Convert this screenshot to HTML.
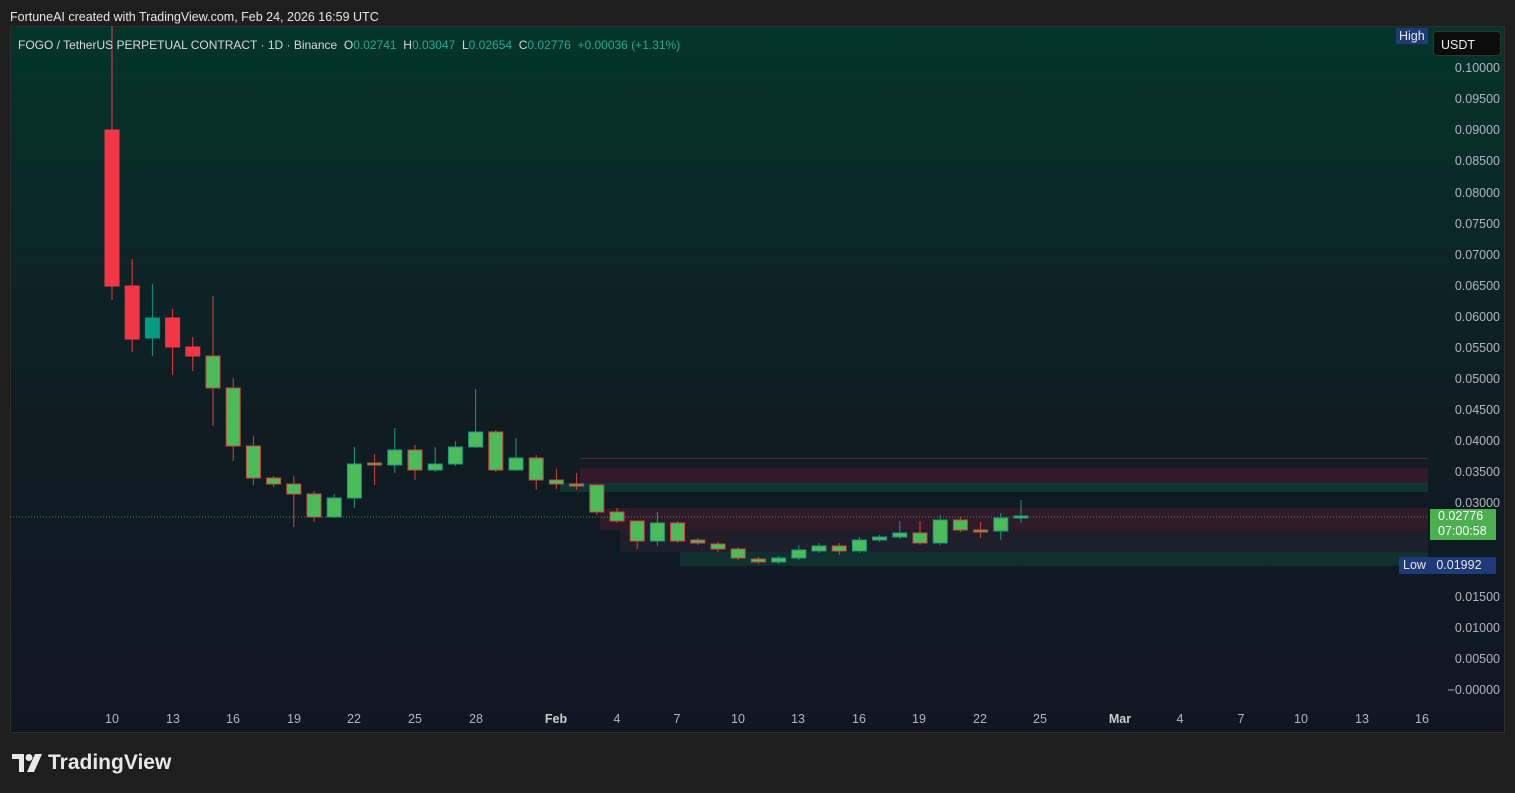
<!DOCTYPE html>
<html><head><meta charset="utf-8"><style>
html,body{margin:0;padding:0;background:#1e1e1e;width:1515px;height:793px;overflow:hidden;font-family:"Liberation Sans",sans-serif}
#top{position:absolute;left:10px;top:10px;color:#e6e6e6;font-size:12.5px}
#box{position:absolute;left:10px;top:26px;width:1495px;height:707px;background:linear-gradient(#03352a 0%,#0b2627 30%,#101b22 60%,#111722 100%);border:1px solid #2e2e2e;box-sizing:border-box}
#legend{position:absolute;left:18px;top:38px;font-size:12px;color:#d9d9d9;white-space:nowrap}
#legend b{font-weight:normal;color:#22ab94}
.pl{position:absolute;right:15px;font-size:12.5px;color:#b2b5be;text-align:right}
.tl{position:absolute;top:712px;font-size:12.5px;color:#b2b5be;transform:translateX(-50%)}
#logo{position:absolute;left:12px;top:751px;color:#e8e8e8;font-size:21px;font-weight:bold;display:flex;align-items:center;gap:6px}
svg{position:absolute;left:0;top:0}
</style></head><body>
<div id="top">FortuneAI created with TradingView.com, Feb 24, 2026 16:59 UTC</div>
<div id="box"></div>
<svg id="s" width="1515" height="793"></svg>
<div id="legend">FOGO / TetherUS PERPETUAL CONTRACT · 1D · Binance &nbsp;O<b>0.02741</b> &nbsp;H<b>0.03047</b> &nbsp;L<b>0.02654</b> &nbsp;C<b>0.02776</b> &nbsp;<b>+0.00036 (+1.31%)</b></div>
<div style="position:absolute;left:1396px;top:28px;background:#1e3a78;color:#e6e6e6;font-size:12.5px;padding:1px 3px">High</div>
<div style="position:absolute;left:1433px;top:31px;width:68px;height:25px;background:#0c0c0c;border:1px solid #333;border-radius:4px;box-sizing:border-box;color:#eee;font-size:12.5px;padding:6px 0 0 7px">USDT</div>
<div class="pl" style="top:61px">0.10000</div>
<div class="pl" style="top:92px">0.09500</div>
<div class="pl" style="top:123px">0.09000</div>
<div class="pl" style="top:154px">0.08500</div>
<div class="pl" style="top:186px">0.08000</div>
<div class="pl" style="top:217px">0.07500</div>
<div class="pl" style="top:248px">0.07000</div>
<div class="pl" style="top:279px">0.06500</div>
<div class="pl" style="top:310px">0.06000</div>
<div class="pl" style="top:341px">0.05500</div>
<div class="pl" style="top:372px">0.05000</div>
<div class="pl" style="top:403px">0.04500</div>
<div class="pl" style="top:434px">0.04000</div>
<div class="pl" style="top:465px">0.03500</div>
<div class="pl" style="top:496px">0.03000</div>
<div class="pl" style="top:590px">0.01500</div>
<div class="pl" style="top:621px">0.01000</div>
<div class="pl" style="top:652px">0.00500</div>
<div class="pl" style="top:683px">−0.00000</div>
<div style="position:absolute;left:1430px;top:509px;width:66px;height:31px;background:#4caf50;color:#fff;font-size:12.5px;line-height:15px;padding-left:8px;box-sizing:border-box">0.02776<br>07:00:58</div>
<div style="position:absolute;left:1399px;top:557px;width:97px;height:17px;background:#1e3a78;color:#e6e6e6;font-size:12.5px;line-height:17px;padding-left:4px;box-sizing:border-box">Low&nbsp;&nbsp;&nbsp;0.01992</div>
<div class="tl" style="left:112px">10</div><div class="tl" style="left:173px">13</div><div class="tl" style="left:233px">16</div><div class="tl" style="left:294px">19</div><div class="tl" style="left:354px">22</div><div class="tl" style="left:415px">25</div><div class="tl" style="left:476px">28</div><div class="tl" style="left:556px;font-weight:bold;color:#ccc">Feb</div><div class="tl" style="left:617px">4</div><div class="tl" style="left:677px">7</div><div class="tl" style="left:738px">10</div><div class="tl" style="left:798px">13</div><div class="tl" style="left:859px">16</div><div class="tl" style="left:919px">19</div><div class="tl" style="left:980px">22</div><div class="tl" style="left:1040px">25</div><div class="tl" style="left:1120px;font-weight:bold;color:#ccc">Mar</div><div class="tl" style="left:1180px">4</div><div class="tl" style="left:1241px">7</div><div class="tl" style="left:1301px">10</div><div class="tl" style="left:1362px">13</div><div class="tl" style="left:1422px">16</div>
<div id="logo"><svg width="30" height="18" viewBox="0 0 30 18" style="position:static"><path d="M0 0h12v18h-5V5H0z" fill="#e8e8e8"/><circle cx="17" cy="3.5" r="3.5" fill="#e8e8e8"/><path d="M23 0h7l-8 18h-7z" fill="#e8e8e8"/></svg>TradingView</div>
<script>
var s=document.getElementById('s'),h='';
h+='<rect x="580" y="458" width="848" height="1" fill="#5a2234"/>';
h+='<rect x="580" y="468" width="848" height="16" fill="#4a1a30" opacity=".6"/>';
h+='<rect x="560" y="483" width="868" height="9" fill="#0f3c38" opacity=".8"/>';
h+='<rect x="600" y="508" width="828" height="22" fill="#4a1a30" opacity=".55"/>';
h+='<rect x="620" y="530" width="808" height="22" fill="#2a2232" opacity=".6"/>';
h+='<rect x="680" y="552" width="748" height="14" fill="#0f3a36" opacity=".7"/>';
h+='<line x1="10" y1="517" x2="1428" y2="517" stroke="#4caf50" stroke-dasharray="1 2" opacity=".8"/>';
var c=[[130,286,26,300],[286,339,259,352],[338,318,284,356],[318,347,309,375],[347,356,337,371],[356,388,296,426],[388,446,378,461],[446,478,436,485],[478,484,476,487],[484,494,476,527],[494,517,491,522],[517,498,494,518],[498,464,447,508],[463,465,454,485],[465,450,428,473],[450,470,445,480],[470,464,447,472],[464,447,441,466],[447,432,389,448],[432,470,430,472],[470,458,438,471],[458,480,455,490],[480,484,469,489],[484,486,473,490],[485,512,484,515],[512,521,508,523],[521,541,521,549],[541,523,512,546],[523,541,521,543],[540,543,538,545],[544,549,542,552],[549,558,547,560],[559,562,557,564],[562,558,556,564],[558,550,545,560],[551,546,543,553],[546,551,543,555],[551,540,537,553],[540,537,535,542],[537,533,521,539],[533,543,521,545],[543,520,515,545],[520,530,517,532],[530,531,522,538],[531,518,513,540],[518,516,500,523]];
for(var i=0;i<c.length;i++){var x=112+i*20.2,o=c[i][0],cl=c[i][1],hi=c[i][2],lo=c[i][3],dn=cl>o;
var fill,st,wk;
if(i<5){fill=dn?'#f23645':'#089981';st=fill;wk=fill;}else{fill='#4cbb5a';st=dn?'#d0453d':'#1a9a80';wk=st;}
var t=Math.min(o,cl),b=Math.max(o,cl);if(b-t<2){b=t+2;}
h+='<line x1="'+x+'" y1="'+hi+'" x2="'+x+'" y2="'+lo+'" stroke="'+wk+'" stroke-width="1"/>';
h+='<rect x="'+(x-7)+'" y="'+t+'" width="14" height="'+(b-t)+'" fill="'+fill+'" stroke="'+st+'" stroke-width="1"/>';}
s.innerHTML=h;
</script>
</body></html>
